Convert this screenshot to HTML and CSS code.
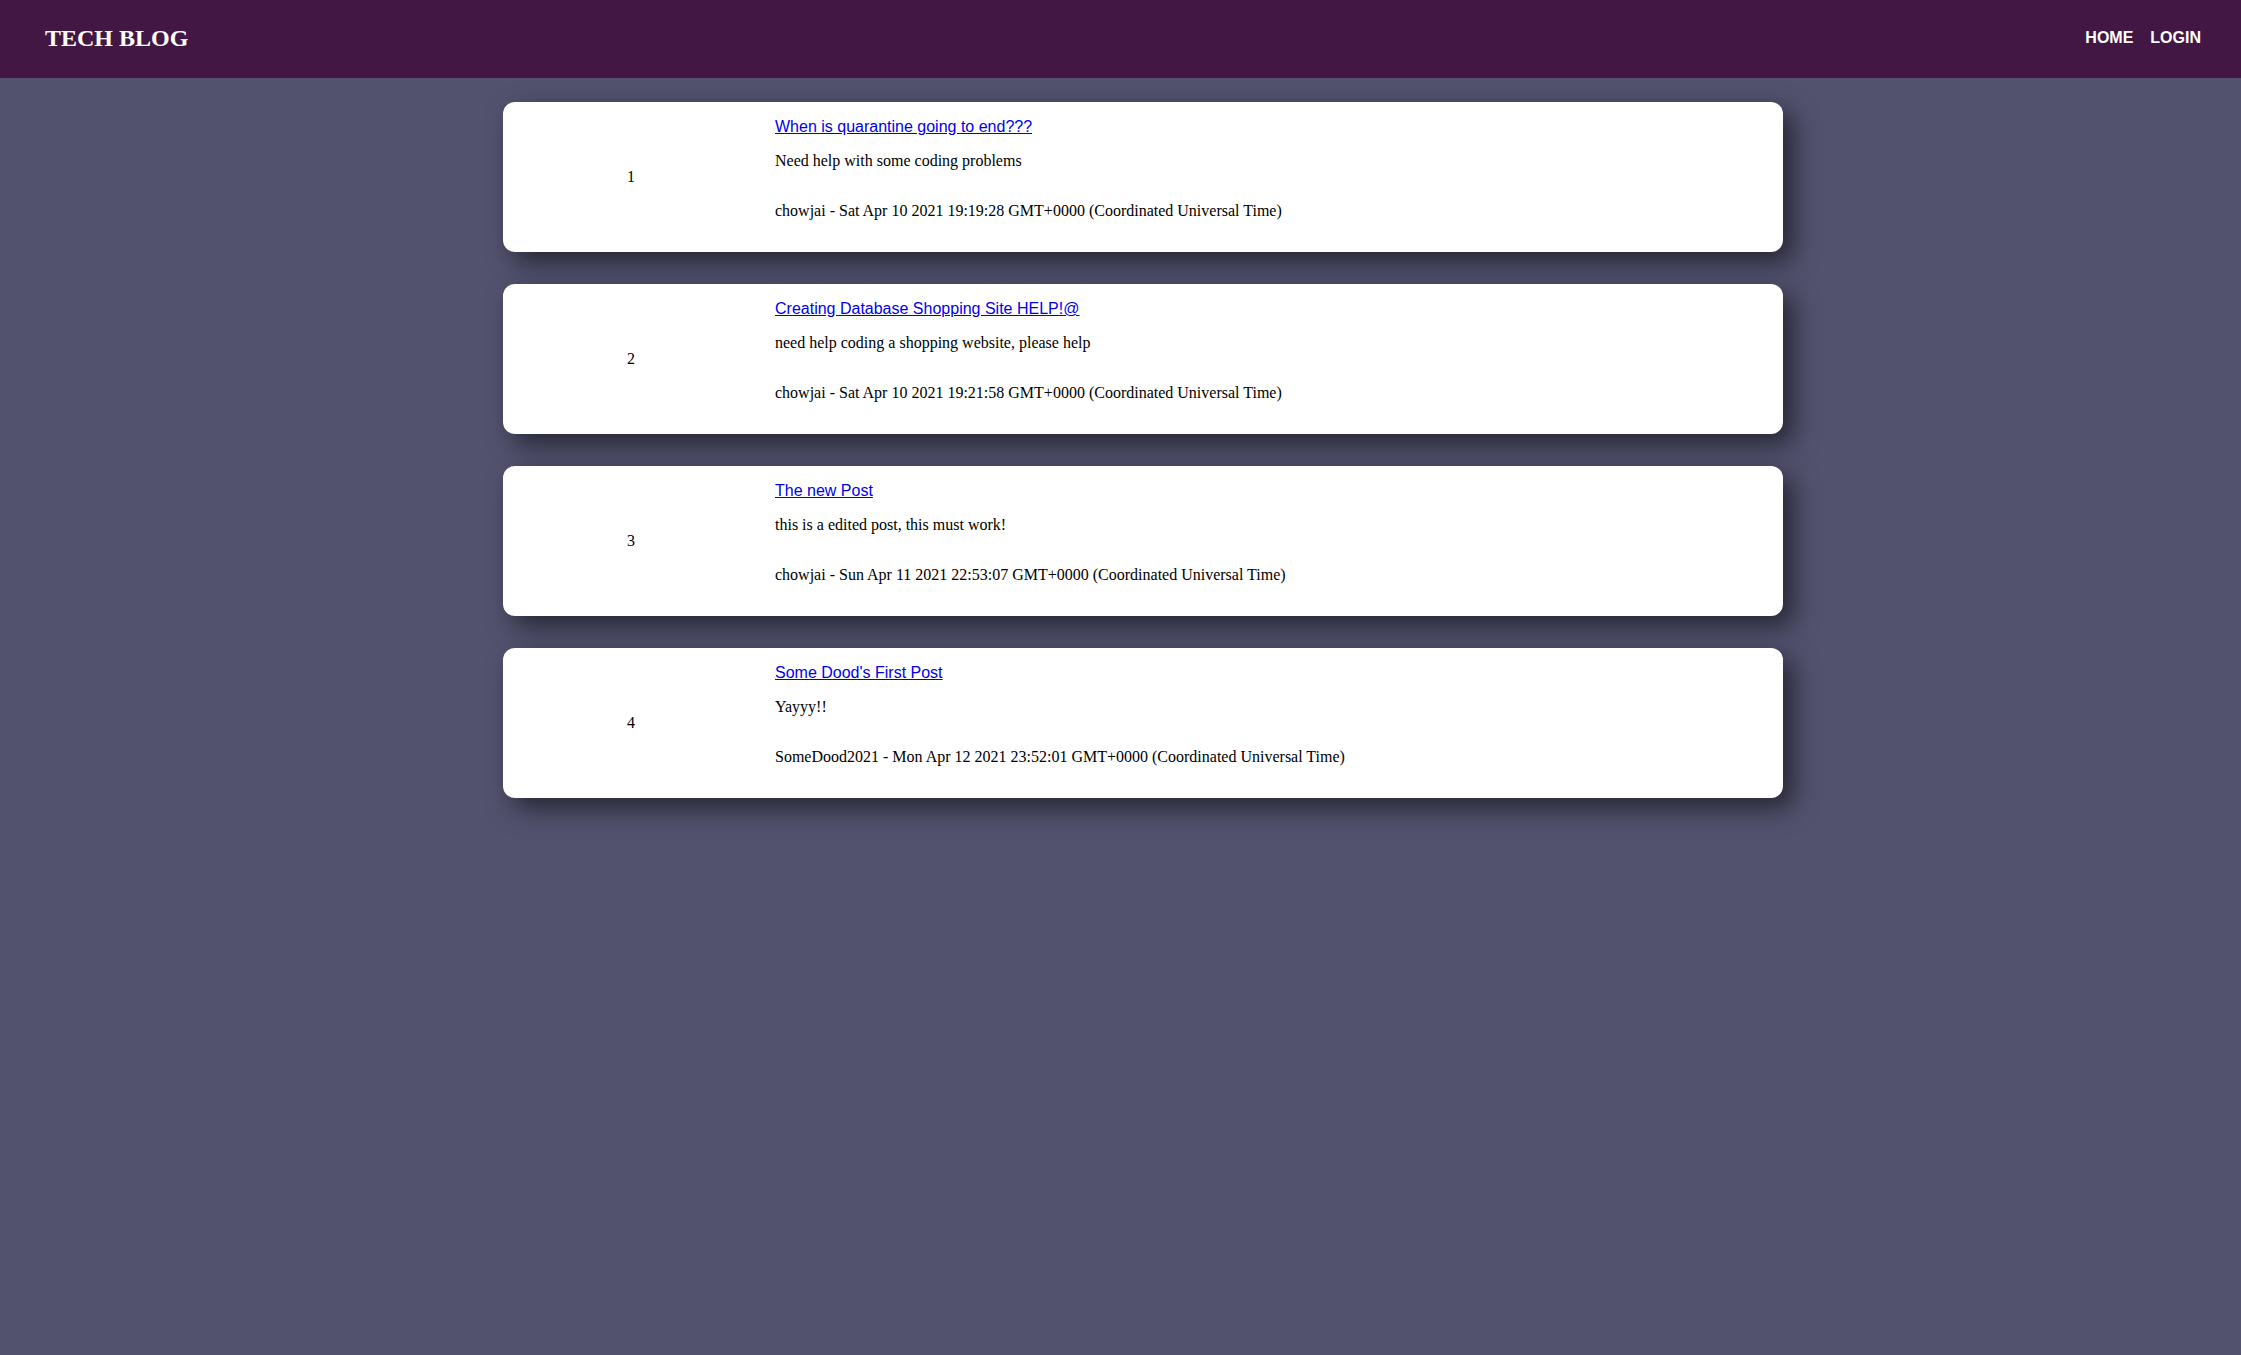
FILE: index.html
```html
<!DOCTYPE html>
<html lang="en">
<head>
<meta charset="utf-8">
<title>Tech Blog</title>
<link rel="stylesheet" href="styles.css">
</head>
<body>
<header class="topbar">
  <h1 class="brand">TECH BLOG</h1>
  <nav class="nav">
    <a class="nav-link" href="#">HOME</a>
    <a class="nav-link" href="#">LOGIN</a>
  </nav>
</header>
<main class="posts">
  <article class="card">
    <div class="card-num">1</div>
    <div class="card-body">
      <p class="card-title"><a href="#">When is quarantine going to end???</a></p>
      <p class="card-text">Need help with some coding problems</p>
      <p class="card-meta">chowjai - Sat Apr 10 2021 19:19:28 GMT+0000 (Coordinated Universal Time)</p>
    </div>
  </article>
  <article class="card">
    <div class="card-num">2</div>
    <div class="card-body">
      <p class="card-title"><a href="#">Creating Database Shopping Site HELP!@</a></p>
      <p class="card-text">need help coding a shopping website, please help</p>
      <p class="card-meta">chowjai - Sat Apr 10 2021 19:21:58 GMT+0000 (Coordinated Universal Time)</p>
    </div>
  </article>
  <article class="card">
    <div class="card-num">3</div>
    <div class="card-body">
      <p class="card-title"><a href="#">The new Post</a></p>
      <p class="card-text">this is a edited post, this must work!</p>
      <p class="card-meta">chowjai - Sun Apr 11 2021 22:53:07 GMT+0000 (Coordinated Universal Time)</p>
    </div>
  </article>
  <article class="card">
    <div class="card-num">4</div>
    <div class="card-body">
      <p class="card-title"><a href="#">Some Dood's First Post</a></p>
      <p class="card-text">Yayyy!!</p>
      <p class="card-meta">SomeDood2021 - Mon Apr 12 2021 23:52:01 GMT+0000 (Coordinated Universal Time)</p>
    </div>
  </article>
</main>
</body>
</html>
```
FILE: styles.css
```css
html, body {
  margin: 0;
  padding: 0;
}
body {
  background: #52526f;
  font-family: "Liberation Serif", "Times New Roman", serif;
  font-size: 16px;
  color: #000;
  min-height: 100vh;
}
.topbar {
  height: 78px;
  box-sizing: border-box;
  background: #431744;
  display: flex;
  align-items: center;
  justify-content: space-between;
  padding: 0 40px 2px 45px;
}
.brand {
  margin: 0;
  font-family: "Liberation Serif", "Times New Roman", serif;
  font-weight: bold;
  font-size: 24px;
  color: #fff;
}
.nav {
  display: flex;
  gap: 17px;
}
.nav-link {
  font-family: "Liberation Sans", Arial, sans-serif;
  font-weight: bold;
  font-size: 16px;
  color: #fff;
  text-decoration: none;
}
.posts {
  width: 1280px;
  margin: 24px 0 0 503px;
  display: flex;
  flex-direction: column;
  gap: 32px;
}
.card {
  background: #fff;
  border-radius: 12px;
  box-shadow: 10px 10px 26px rgba(0, 0, 0, 0.55);
  display: flex;
  align-items: center;
  padding: 16px 0 16px;
}
.card-num {
  width: 256px;
  flex: none;
  text-align: center;
}
.card-body {
  flex: 1;
  padding-left: 16px;
}
.card-body p {
  margin: 0;
}
.card-title {
  font-family: "Liberation Sans", Arial, sans-serif;
  margin-bottom: 16px !important;
}
.card-title a {
  color: #0000ee;
  text-decoration: underline;
}
.card-text {
  margin-bottom: 32px !important;
}
.card-meta {
  margin-bottom: 16px !important;
}
```
